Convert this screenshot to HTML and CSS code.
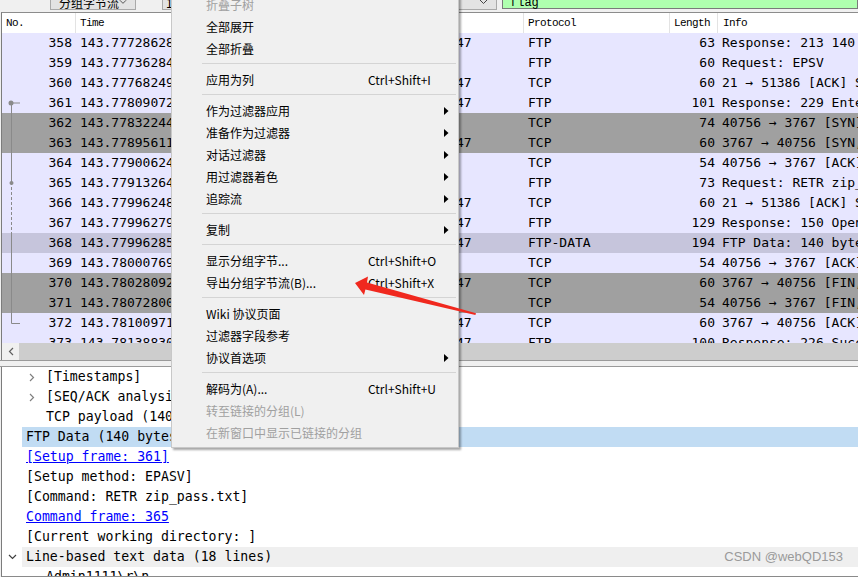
FILE: index.html
```html
<!DOCTYPE html>
<html lang="zh-CN">
<head>
<meta charset="utf-8">
<title>Wireshark</title>
<link rel="stylesheet" href="styles.css">
</head>
<body>
<div class="app">
  <div class="toolbar">
    <div class="combo c1"><span class="combo-text">分组字节流</span><svg class="chev" width="9" height="6" viewBox="0 0 9 6"><path d="M1 1 L4.5 4.5 L8 1" fill="none" stroke="#444" stroke-width="1"/></svg></div>
    <div class="combo c2"><span class="combo-text">1</span><svg class="chev" width="9" height="6" viewBox="0 0 9 6"><path d="M1 1 L4.5 4.5 L8 1" fill="none" stroke="#444" stroke-width="1"/></svg></div>
    <div class="filter"><span class="filter-text">flag</span></div>
  </div>

  <div class="plist">
    <div class="phead">
      <div class="hc">No.</div>
      <div class="hc">Time</div>
      <div class="hc">Source</div>
      <div class="hc">Destination</div>
      <div class="hc">Protocol</div>
      <div class="hc">Length</div>
      <div class="hc">Info</div>
    </div>
    <div class="pbody">
      <div class="prow tcp"><span class="no">358</span><span class="time">143.77728628</span><span class="src">192.168.43.1</span><span class="dst">192.168.43.147</span><span class="proto">FTP</span><span class="len">63</span><span class="info">Response: 213 140</span></div>
      <div class="prow tcp"><span class="no">359</span><span class="time">143.77736284</span><span class="src">192.168.43.147</span><span class="dst">192.168.43.1</span><span class="proto">FTP</span><span class="len">60</span><span class="info">Request: EPSV</span></div>
      <div class="prow tcp"><span class="no">360</span><span class="time">143.77768249</span><span class="src">192.168.43.1</span><span class="dst">192.168.43.147</span><span class="proto">TCP</span><span class="len">60</span><span class="info">21 → 51386 [ACK] Seq=1</span></div>
      <div class="prow tcp"><span class="no">361</span><span class="time">143.77809072</span><span class="src">192.168.43.1</span><span class="dst">192.168.43.147</span><span class="proto">FTP</span><span class="len">101</span><span class="info">Response: 229 Entering</span></div>
      <div class="prow synfin"><span class="no">362</span><span class="time">143.77832244</span><span class="src">192.168.43.147</span><span class="dst">192.168.43.1</span><span class="proto">TCP</span><span class="len">74</span><span class="info">40756 → 3767 [SYN] Seq=0</span></div>
      <div class="prow synfin"><span class="no">363</span><span class="time">143.77895611</span><span class="src">192.168.43.1</span><span class="dst">192.168.43.147</span><span class="proto">TCP</span><span class="len">60</span><span class="info">3767 → 40756 [SYN, ACK]</span></div>
      <div class="prow tcp"><span class="no">364</span><span class="time">143.77900624</span><span class="src">192.168.43.147</span><span class="dst">192.168.43.1</span><span class="proto">TCP</span><span class="len">54</span><span class="info">40756 → 3767 [ACK] Seq=1</span></div>
      <div class="prow tcp"><span class="no">365</span><span class="time">143.77913264</span><span class="src">192.168.43.147</span><span class="dst">192.168.43.1</span><span class="proto">FTP</span><span class="len">73</span><span class="info">Request: RETR zip_pass.txt</span></div>
      <div class="prow tcp"><span class="no">366</span><span class="time">143.77996248</span><span class="src">192.168.43.1</span><span class="dst">192.168.43.147</span><span class="proto">TCP</span><span class="len">60</span><span class="info">21 → 51386 [ACK] Seq=1</span></div>
      <div class="prow tcp"><span class="no">367</span><span class="time">143.77996279</span><span class="src">192.168.43.1</span><span class="dst">192.168.43.147</span><span class="proto">FTP</span><span class="len">129</span><span class="info">Response: 150 Opening</span></div>
      <div class="prow sel"><span class="no">368</span><span class="time">143.77996285</span><span class="src">192.168.43.1</span><span class="dst">192.168.43.147</span><span class="proto">FTP-DATA</span><span class="len">194</span><span class="info">FTP Data: 140 bytes</span></div>
      <div class="prow tcp"><span class="no">369</span><span class="time">143.78000769</span><span class="src">192.168.43.147</span><span class="dst">192.168.43.1</span><span class="proto">TCP</span><span class="len">54</span><span class="info">40756 → 3767 [ACK] Seq=1</span></div>
      <div class="prow synfin"><span class="no">370</span><span class="time">143.78028092</span><span class="src">192.168.43.1</span><span class="dst">192.168.43.147</span><span class="proto">TCP</span><span class="len">60</span><span class="info">3767 → 40756 [FIN, ACK]</span></div>
      <div class="prow synfin"><span class="no">371</span><span class="time">143.78072800</span><span class="src">192.168.43.147</span><span class="dst">192.168.43.1</span><span class="proto">TCP</span><span class="len">54</span><span class="info">40756 → 3767 [FIN, ACK]</span></div>
      <div class="prow tcp"><span class="no">372</span><span class="time">143.78100971</span><span class="src">192.168.43.1</span><span class="dst">192.168.43.147</span><span class="proto">TCP</span><span class="len">60</span><span class="info">3767 → 40756 [ACK] Seq=2</span></div>
      <div class="prow tcp"><span class="no">373</span><span class="time">143.78138830</span><span class="src">192.168.43.1</span><span class="dst">192.168.43.147</span><span class="proto">FTP</span><span class="len">100</span><span class="info">Response: 226 Successfully</span></div>
      <svg class="tree" width="24" height="310" viewBox="0 0 24 310">
        <path d="M9 70 H18" stroke="#8a8a8a" stroke-width="1"/>
        <circle cx="9" cy="70" r="2.5" fill="#8a8a8a"/>
        <path d="M9.5 72 V152" stroke="#8a8a8a" stroke-width="1"/>
        <circle cx="9.5" cy="150" r="2" fill="#8a8a8a"/>
        <path d="M9.5 154 V200" stroke="#8a8a8a" stroke-width="1" stroke-dasharray="3 2"/>
        <path d="M9.5 200 V290.5 H18" fill="none" stroke="#8a8a8a" stroke-width="1"/>
      </svg>
    </div>
    <div class="hscroll">
      <div class="sbtn"><svg width="6" height="9" viewBox="0 0 6 9"><path d="M5 1 L1.5 4.5 L5 8" fill="none" stroke="#606060" stroke-width="1.2"/></svg></div>
      <div class="thumb"></div>
    </div>
  </div>

  <div class="splitter"></div>

  <div class="details">
    <div class="drow lv1"><span class="exp"><svg width="6" height="9" viewBox="0 0 6 9"><path d="M1 1 L4.5 4.5 L1 8" fill="none" stroke="#808080" stroke-width="1.2"/></svg></span><span class="lbl">[Timestamps]</span></div>
    <div class="drow lv1"><span class="exp"><svg width="6" height="9" viewBox="0 0 6 9"><path d="M1 1 L4.5 4.5 L1 8" fill="none" stroke="#808080" stroke-width="1.2"/></svg></span><span class="lbl">[SEQ/ACK analysis]</span></div>
    <div class="drow lv1"><span class="exp"></span><span class="lbl">TCP payload (140 bytes)</span></div>
    <div class="drow"><span class="exp"></span><span class="lbl hl">FTP Data (140 bytes)</span></div>
    <div class="drow"><span class="exp"></span><span class="lbl"><span class="link">[Setup frame: 361]</span></span></div>
    <div class="drow"><span class="exp"></span><span class="lbl">[Setup method: EPASV]</span></div>
    <div class="drow"><span class="exp"></span><span class="lbl">[Command: RETR zip_pass.txt]</span></div>
    <div class="drow"><span class="exp"></span><span class="lbl"><span class="link">Command frame: 365</span></span></div>
    <div class="drow"><span class="exp"></span><span class="lbl">[Current working directory: ]</span></div>
    <div class="drow"><span class="exp"><svg width="9" height="6" viewBox="0 0 9 6"><path d="M1 1 L4.5 4.5 L8 1" fill="none" stroke="#404040" stroke-width="1.2"/></svg></span><span class="lbl grey">Line-based text data (18 lines)<span class="watermark">CSDN @webQD153</span></span></div>
    <div class="drow lv1"><span class="exp"></span><span class="lbl">Admin1111\r\n</span></div>
  </div>
</div>

<div class="menu">
  <div class="mi dis"><span class="ml">折叠子树</span></div>
  <div class="mi"><span class="ml">全部展开</span></div>
  <div class="mi"><span class="ml">全部折叠</span></div>
  <div class="msep"></div>
  <div class="mi"><span class="ml">应用为列</span><span class="ms">Ctrl+Shift+I</span></div>
  <div class="msep"></div>
  <div class="mi"><span class="ml">作为过滤器应用</span><span class="ms"></span><svg class="sub" width="5" height="8" viewBox="0 0 5 8"><path d="M0 0 L4.5 4 L0 8 Z" fill="#000"/></svg></div>
  <div class="mi"><span class="ml">准备作为过滤器</span><span class="ms"></span><svg class="sub" width="5" height="8" viewBox="0 0 5 8"><path d="M0 0 L4.5 4 L0 8 Z" fill="#000"/></svg></div>
  <div class="mi"><span class="ml">对话过滤器</span><span class="ms"></span><svg class="sub" width="5" height="8" viewBox="0 0 5 8"><path d="M0 0 L4.5 4 L0 8 Z" fill="#000"/></svg></div>
  <div class="mi"><span class="ml">用过滤器着色</span><span class="ms"></span><svg class="sub" width="5" height="8" viewBox="0 0 5 8"><path d="M0 0 L4.5 4 L0 8 Z" fill="#000"/></svg></div>
  <div class="mi"><span class="ml">追踪流</span><span class="ms"></span><svg class="sub" width="5" height="8" viewBox="0 0 5 8"><path d="M0 0 L4.5 4 L0 8 Z" fill="#000"/></svg></div>
  <div class="msep"></div>
  <div class="mi"><span class="ml">复制</span><span class="ms"></span><svg class="sub" width="5" height="8" viewBox="0 0 5 8"><path d="M0 0 L4.5 4 L0 8 Z" fill="#000"/></svg></div>
  <div class="msep"></div>
  <div class="mi"><span class="ml">显示分组字节...</span><span class="ms">Ctrl+Shift+O</span></div>
  <div class="mi"><span class="ml">导出分组字节流(B)...</span><span class="ms">Ctrl+Shift+X</span></div>
  <div class="msep"></div>
  <div class="mi"><span class="ml">Wiki 协议页面</span></div>
  <div class="mi"><span class="ml">过滤器字段参考</span></div>
  <div class="mi"><span class="ml">协议首选项</span><span class="ms"></span><svg class="sub" width="5" height="8" viewBox="0 0 5 8"><path d="M0 0 L4.5 4 L0 8 Z" fill="#000"/></svg></div>
  <div class="msep"></div>
  <div class="mi"><span class="ml">解码为(A)...</span><span class="ms">Ctrl+Shift+U</span></div>
  <div class="mi dis"><span class="ml">转至链接的分组(L)</span></div>
  <div class="mi dis"><span class="ml">在新窗口中显示已链接的分组</span></div>
</div>

<svg class="arrow" width="858" height="577" viewBox="0 0 858 577">
  <polygon points="355,283 368,276.5 367,282.4 476,313.2 475.4,315 365.4,289.6 364,295" fill="#f0281e"/>
</svg>
</body>
</html>
```

FILE: styles.css
```css
html, body {
  margin: 0;
  padding: 0;
}

body {
  width: 858px;
  height: 577px;
  overflow: hidden;
  position: relative;
  background: #f0f0f0;
  font-family: "DejaVu Sans Mono", monospace;
  font-size: 13px;
  color: #000;
}

.app {
  display: flex;
  flex-direction: column;
  height: 577px;
}

/* ---------- toolbar ---------- */
.toolbar {
  height: 12px;
  display: flex;
  align-items: flex-end;
  overflow: hidden;
  background: #f0f0f0;
  flex: none;
}

.combo {
  height: 20px;
  margin-bottom: 2px;
  box-sizing: border-box;
  border: 1px solid #a9a9a9;
  background: #e3e3e3;
  display: flex;
  align-items: center;
  flex: none;
  font-family: "Noto Sans CJK SC", sans-serif;
  font-size: 12px;
  line-height: 18px;
  white-space: nowrap;
}

.c1 {
  margin-left: 50px;
  width: 86px;
  padding-left: 8px;
}

.c2 {
  margin-left: 26px;
  width: 335px;
  padding-left: 3px;
}

.combo-text {
  flex: 1;
  position: relative;
  top: 3px;
  white-space: nowrap;
}

.chev {
  margin-right: 8px;
  position: relative;
  top: 2px;
}

.filter {
  flex: 1;
  margin-left: 5px;
  margin-bottom: 3px;
  height: 20px;
  box-sizing: border-box;
  border: 1px solid #7a7a7a;
  background: #afffaf;
  padding-left: 7px;
  font-family: "Liberation Mono", monospace;
  font-size: 12px;
  line-height: 18px;
}

.filter-text {
  position: relative;
  top: 4px;
}

/* ---------- packet list ---------- */
.plist {
  margin-left: 1px;
  border-left: 1px solid #7c7c7c;
  border-top: 1px solid #8c8c8c;
  background: #fff;
  flex: none;
}

.phead,
.prow {
  display: grid;
  grid-template-columns: 73px 130px 150px 168px 146px 48px 1fr;
}

.phead {
  height: 20px;
  background: #fff;
  font-family: "Liberation Mono", monospace;
  font-size: 11px;
  letter-spacing: -0.6px;
  line-height: 20px;
}

.hc {
  border-left: 1px solid #e3e3e3;
  padding-left: 4px;
  white-space: nowrap;
  overflow: hidden;
}

.hc:first-child {
  border-left: none;
}

.hc:last-child {
  padding-left: 5px;
}

.pbody {
  height: 310px;
  overflow: hidden;
  position: relative;
}

.prow {
  height: 20px;
  line-height: 20px;
  white-space: nowrap;
}

.prow > span {
  overflow: hidden;
}

.tcp { background: #e7e6ff; }
.synfin { background: #a0a0a0; }
.sel { background: #c6c5dc; }

.no {
  text-align: right;
  padding-right: 3px;
}

.time { padding-left: 5px; }
.src { padding-left: 5px; }
.dst { padding-left: 7px; }
.proto { padding-left: 5px; }

.len {
  text-align: right;
  padding-right: 2px;
}

.info { padding-left: 5px; }

.tree {
  position: absolute;
  left: 0;
  top: 0;
}

.hscroll {
  height: 17px;
  display: flex;
  background: #f0f0f0;
}

.sbtn {
  width: 17px;
  display: flex;
  align-items: center;
  justify-content: center;
}

.thumb {
  flex: 1;
  background: #cdcdcd;
}

/* ---------- splitter ---------- */
.splitter {
  height: 5px;
  border-top: 1px solid #9a9a9a;
  border-bottom: 1px solid #9a9a9a;
  background: #f0f0f0;
  flex: none;
}

/* ---------- details ---------- */
.details {
  margin-left: 1px;
  border-left: 1px solid #7c7c7c;
  border-bottom: 1px solid #8a8a8a;
  background: #fff;
  height: 209px;
  overflow: hidden;
  flex: none;
  font-size: 13.2px;
}

.drow {
  display: flex;
  height: 20px;
  line-height: 20px;
  white-space: nowrap;
}

.drow.lv1 {
  padding-left: 20px;
}

.exp {
  width: 20px;
  flex: none;
  display: flex;
  align-items: center;
  justify-content: center;
}

.lbl {
  flex: 1;
  padding-left: 4px;
  display: flex;
}

.lbl.hl {
  background: #c1dcf3;
}

.lbl.grey {
  background: #efefef;
}

.link {
  color: #0000ff;
  text-decoration: underline;
}

.watermark {
  margin-left: auto;
  padding-right: 15px;
  font-family: "Liberation Sans", sans-serif;
  font-size: 13px;
  color: #9a9a9a;
}

/* ---------- context menu ---------- */
.menu {
  position: absolute;
  left: 171px;
  top: -10px;
  width: 288px;
  box-sizing: border-box;
  padding: 3px 0;
  background: #f0f0f0;
  border: 1px solid #c8c8c8;
  box-shadow: 2px 2px 2px rgba(0, 0, 0, 0.35);
  font-family: "Noto Sans CJK SC", sans-serif;
  font-size: 12px;
  z-index: 5;
}

.mi {
  height: 22px;
  line-height: 22px;
  display: grid;
  grid-template-columns: 162px 1fr 20px;
  padding-left: 34px;
  align-items: center;
  white-space: nowrap;
}

.mi.dis {
  color: #a0a0a0;
}

.ms {
  font-family: "Noto Sans CJK SC", sans-serif;
}

.sub {
  margin-left: 6px;
}

.msep {
  height: 1px;
  background: #d4d4d4;
  margin: 3px 2px 5px 30px;
}

.arrow {
  position: absolute;
  left: 0;
  top: 0;
  pointer-events: none;
  z-index: 10;
}
```
